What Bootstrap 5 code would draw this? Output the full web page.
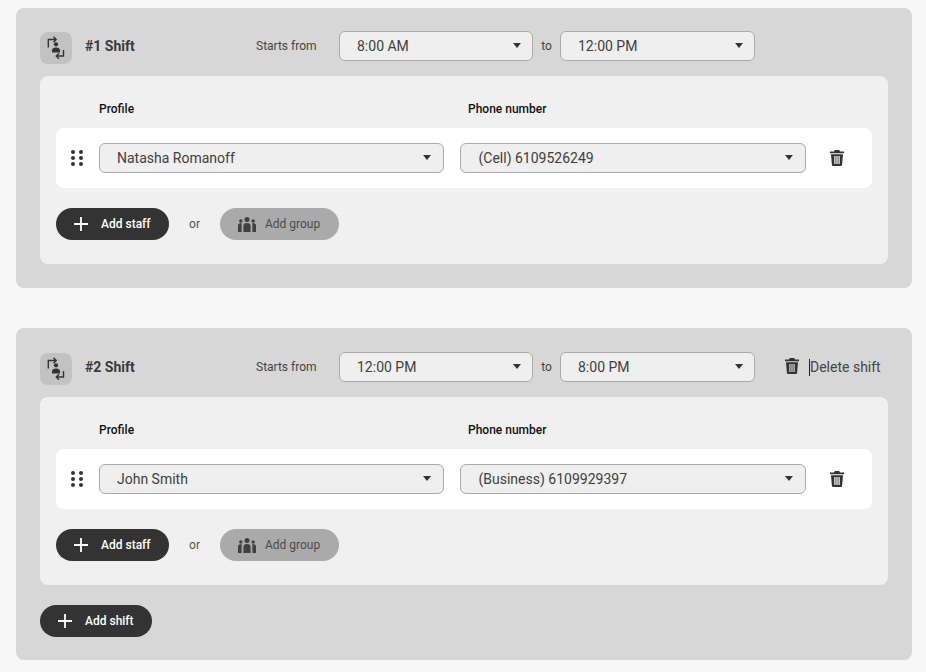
<!DOCTYPE html>
<html lang="en">
<head>
<meta charset="utf-8">
<title>Shifts</title>
<link href="https://cdn.jsdelivr.net/npm/bootstrap@5.3.0/dist/css/bootstrap.min.css" rel="stylesheet">
<style>
html,body{height:672px;overflow:hidden}
body{background:#f7f7f7;font-family:Roboto,"Liberation Sans",sans-serif;color:#333;padding:8px 14px 0 16px}
.shift-panel{background:#d7d7d7;border-radius:8px;padding:23px 24px 24px}
.shift-panel+.shift-panel{margin-top:40px;padding:24px 24px 23px}
.shift-head{height:33px;margin-bottom:12px;line-height:30px;white-space:nowrap}
.shift-ico{width:32px;height:32px;background:#c2c2c2;border-radius:8px;flex:none;margin-top:1px}
.shift-title{font-size:14px;font-weight:700;color:#3a3a3a;width:171px;margin-left:13px;flex:none}
.shift-from{font-size:12px;color:#444;width:83px;flex:none}
.shift-to{font-size:12px;color:#444;width:27px;text-align:center;flex:none}
.fake-select{height:30px;background:#efefef;border:1px solid #aaa;border-radius:6px;display:flex;align-items:center;font-size:14px;color:#404040;position:relative;flex:none}
.fake-select::after{content:"";position:absolute;right:11px;top:11px;border-left:4.5px solid transparent;border-right:4.5px solid transparent;border-top:5px solid #333}
.sel-time{width:194px;padding-left:17px}
.sel-time-end{width:195px;padding-left:17px}
.sel-prof{width:345px;padding-left:17px}
.sel-phone{width:346px;padding-left:17.5px;margin-left:16px}
.sel-prof::after,.sel-phone::after{right:12px}
.del-shift{margin:6px 0 0 30px;flex:none}
.text-caret{border-left:1px solid #222;height:17px;margin:7px 0 0 10px;flex:none}
.del-word{font-size:14px;color:#444;flex:none}
.inner-panel{background:#f0f0f0;border-radius:8px;padding:16px 16px 24px}
.col-labels{height:36px;font-size:12px;font-weight:500;color:#111;padding:9px 0 0 43px;line-height:16px}
.lbl-prof{width:369px}
.staff-row{background:#fff;border-radius:8px;height:60px;padding-left:15px}
.drag-ico{width:28px;flex:none}
.row-trash{margin-left:24px;flex:none}
.action-row{margin-top:20px}
.pill-btn{height:32px;border-radius:16px;border:0;display:inline-flex;align-items:center;font-size:12px;font-weight:500;padding:0;flex:none}
.pill-dark{background:#333;color:#fff}
.pill-grey{background:#aaa;color:#4a4a4a;font-weight:400;width:119px;padding-left:18px}
.pill-staff{width:113px;padding-left:17px}
.pill-shift{width:112px;padding-left:17px;margin-top:20px}
.or-word{font-size:12px;color:#555;width:51px;text-align:center}
.gap-ico{margin-right:9px}
.plus-gap{margin-right:12px}
</style>
</head>
<body>
<svg width="0" height="0" class="position-absolute">
<defs>
<symbol id="i-swap" viewBox="0 0 32 32">
<path d="M8.300 15.500V7.500h7M13.500 4.800l2.700 2.700-2.700 2.700" fill="none" stroke="#333" stroke-width="1.400"/>
<path d="M23.500 18v6h-7M19 21.300l-2.700 2.700 2.700 2.700" fill="none" stroke="#333" stroke-width="1.400"/>
<circle cx="16" cy="12.300" r="2.100" fill="#333"/>
<path d="M12 20.500v-1.800c0-2 1.400-3.200 4-3.200s4 1.200 4 3.200v1.800z" fill="#333"/>
</symbol>
<symbol id="i-trash" viewBox="0 0 14 16">
<path d="M4.800 0h4.400l.8 1.500H14v1.700H0V1.500h4z" fill="#333"/>
<path d="M1 4.200h12l-.9 10.500c-.1.800-.6 1.300-1.400 1.300H3.300c-.8 0-1.300-.5-1.400-1.300zM4.300 6v8h1.200V6zm2.100 0v8h1.200V6zm2.100 0v8h1.200V6z" fill="#333" fill-rule="evenodd"/>
</symbol>
<symbol id="i-drag" viewBox="0 0 12 16">
<circle cx="2" cy="2" r="2" fill="#333"/><circle cx="10" cy="2" r="2" fill="#333"/>
<circle cx="2" cy="8" r="2" fill="#333"/><circle cx="10" cy="8" r="2" fill="#333"/>
<circle cx="2" cy="14" r="2" fill="#333"/><circle cx="10" cy="14" r="2" fill="#333"/>
</symbol>
<symbol id="i-plus" viewBox="0 0 16 16">
<path d="M8 1v14M1 8h14" stroke="#fff" stroke-width="1.800" fill="none"/>
</symbol>
<symbol id="i-group" viewBox="0 0 18 15">
<circle cx="9" cy="2.500" r="2.500" fill="#404040"/>
<circle cx="2.800" cy="4" r="1.700" fill="#404040"/><circle cx="15.200" cy="4" r="1.700" fill="#404040"/>
<path d="M5.400 15V9c0-1.900 1.300-3 3.600-3s3.600 1.100 3.600 3v6z" fill="#404040"/>
<path d="M0 15V8.500c0-1.300.8-2.300 2.200-2.300h1.700C3.600 7 3.600 8 3.600 9v6zM18 15V8.500c0-1.300-.8-2.300-2.200-2.300h-1.700c.3.800.3 1.800.3 2.800v6z" fill="#404040"/>
</symbol>
</defs>
</svg>

<section class="shift-panel">
  <div class="shift-head d-flex align-items-start">
    <svg class="shift-ico"><use href="#i-swap"/></svg>
    <div class="shift-title">#1 Shift</div>
    <div class="shift-from">Starts from</div>
    <div class="fake-select sel-time">8:00 AM</div>
    <div class="shift-to">to</div>
    <div class="fake-select sel-time-end">12:00 PM</div>
  </div>
  <div class="inner-panel">
    <div class="col-labels d-flex"><span class="lbl-prof">Profile</span><span>Phone number</span></div>
    <div class="staff-row d-flex align-items-center">
      <div class="drag-ico d-flex"><svg width="12" height="16"><use href="#i-drag"/></svg></div>
      <div class="fake-select sel-prof">Natasha Romanoff</div>
      <div class="fake-select sel-phone">(Cell) 6109526249</div>
      <svg class="row-trash" width="14" height="16"><use href="#i-trash"/></svg>
    </div>
    <div class="action-row d-flex align-items-center">
      <button type="button" class="pill-btn pill-dark pill-staff"><svg class="plus-gap" width="16" height="16"><use href="#i-plus"/></svg>Add staff</button>
      <span class="or-word">or</span>
      <button type="button" class="pill-btn pill-grey"><svg class="gap-ico" width="18" height="15"><use href="#i-group"/></svg>Add group</button>
    </div>
  </div>
</section>

<section class="shift-panel">
  <div class="shift-head d-flex align-items-start">
    <svg class="shift-ico"><use href="#i-swap"/></svg>
    <div class="shift-title">#2 Shift</div>
    <div class="shift-from">Starts from</div>
    <div class="fake-select sel-time">12:00 PM</div>
    <div class="shift-to">to</div>
    <div class="fake-select sel-time-end">8:00 PM</div>
    <svg class="del-shift" width="14" height="16"><use href="#i-trash"/></svg>
    <span class="text-caret"></span><span class="del-word">Delete shift</span>
  </div>
  <div class="inner-panel">
    <div class="col-labels d-flex"><span class="lbl-prof">Profile</span><span>Phone number</span></div>
    <div class="staff-row d-flex align-items-center">
      <div class="drag-ico d-flex"><svg width="12" height="16"><use href="#i-drag"/></svg></div>
      <div class="fake-select sel-prof">John Smith</div>
      <div class="fake-select sel-phone">(Business) 6109929397</div>
      <svg class="row-trash" width="14" height="16"><use href="#i-trash"/></svg>
    </div>
    <div class="action-row d-flex align-items-center">
      <button type="button" class="pill-btn pill-dark pill-staff"><svg class="plus-gap" width="16" height="16"><use href="#i-plus"/></svg>Add staff</button>
      <span class="or-word">or</span>
      <button type="button" class="pill-btn pill-grey"><svg class="gap-ico" width="18" height="15"><use href="#i-group"/></svg>Add group</button>
    </div>
  </div>
  <button type="button" class="pill-btn pill-dark pill-shift"><svg class="plus-gap" width="16" height="16"><use href="#i-plus"/></svg>Add shift</button>
</section>
<script src="https://cdn.jsdelivr.net/npm/bootstrap@5.3.0/dist/js/bootstrap.bundle.min.js"></script>
</body>
</html>
